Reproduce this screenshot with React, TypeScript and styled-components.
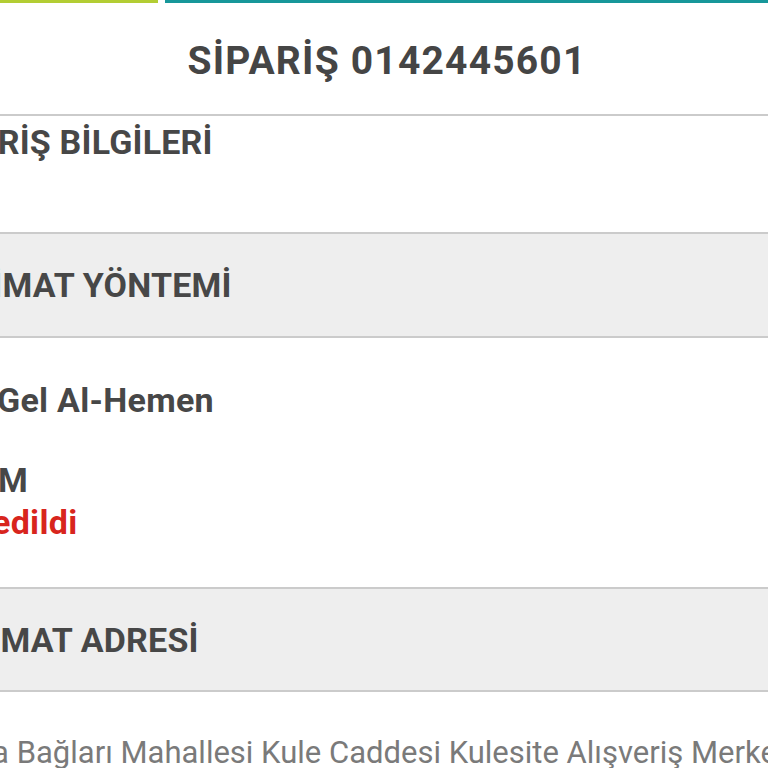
import styled, { createGlobalStyle } from "styled-components";

const GlobalStyle = createGlobalStyle`
  html, body {
    margin: 0;
    padding: 0;
    background: #ffffff;
  }
  body {
    font-family: "Roboto", "Liberation Sans", sans-serif;
    color: #474747;
  }
`;

const Screen = styled.div`
  width: 768px;
  height: 768px;
  overflow: hidden;
  display: flex;
  flex-direction: column;
  background: #ffffff;
`;

const TopBar = styled.div`
  display: flex;
  gap: 7px;
  height: 3px;
  flex-shrink: 0;
`;

const BarSegment = styled.div<{ $color: string; $width?: number }>`
  background: ${(p) => p.$color};
  ${(p) => (p.$width ? `width: ${p.$width}px;` : "flex: 1;")}
`;

const Header = styled.header`
  height: 111px;
  flex-shrink: 0;
  display: flex;
  align-items: center;
  justify-content: center;
  border-bottom: 2px solid #cbcbcb;
`;

const Title = styled.h1`
  margin: 4px 0 0;
  font-family: "Roboto", sans-serif;
  font-weight: 700;
  font-size: 39px;
  letter-spacing: 1.2px;
  color: #454545;
  padding-left: 6px;
`;

const Block = styled.section<{ $height: number; $tinted?: boolean; $center?: boolean }>`
  height: ${(p) => p.$height}px;
  flex-shrink: 0;
  background: ${(p) => (p.$tinted ? "#eeeeee" : "#ffffff")};
  border-bottom: 2px solid #cbcbcb;
  display: flex;
  flex-direction: column;
  justify-content: ${(p) => (p.$center ? "center" : "flex-start")};
  white-space: nowrap;
`;

const Heading = styled.h2<{ $shift: number; $top?: number }>`
  margin: ${(p) => p.$top ?? 0}px 0 0 ${(p) => -p.$shift}px;
  font-weight: 700;
  font-size: 34px;
  line-height: 40px;
  letter-spacing: 0.2px;
  color: #474747;
`;

const Details = styled.div`
  display: flex;
  flex-direction: column;
  padding-top: 41px;
`;

const Value = styled.div<{ $shift: number; $gap?: number; $danger?: boolean }>`
  margin: ${(p) => p.$gap ?? 0}px 0 0 ${(p) => -p.$shift}px;
  font-weight: 700;
  font-size: 34px;
  line-height: 42px;
  letter-spacing: 0.3px;
  color: ${(p) => (p.$danger ? "#d8251d" : "#474747")};
`;

const Address = styled.p<{ $shift: number }>`
  margin: 43px 0 0 ${(p) => -p.$shift}px;
  font-weight: 400;
  font-size: 31px;
  line-height: 36px;
  letter-spacing: 0;
  color: #7a7a7a;
  white-space: nowrap;
`;

const App = () => {
  return (
    <Screen>
      <GlobalStyle />
      <TopBar>
        <BarSegment $color="#b3cd33" $width={158} />
        <BarSegment $color="#17979a" />
      </TopBar>
      <Header>
        <Title>SİPARİŞ 0142445601</Title>
      </Header>

      <Block $height={116}>
        <Heading $shift={76} $top={6}>SİPARİŞ BİLGİLERİ</Heading>
      </Block>

      <Block $height={102} $tinted $center>
        <Heading $shift={88}>TESLİMAT YÖNTEMİ</Heading>
      </Block>

      <Block $height={249}>
        <Details>
          <Value $shift={192}>Mağazadan Gel Al-Hemen</Value>
          <Value $shift={92} $gap={38}>DURUM</Value>
          <Value $shift={86} $danger>İptal edildi</Value>
        </Details>
      </Block>

      <Block $height={101} $tinted $center>
        <Heading $shift={90}>TESLİMAT ADRESİ</Heading>
      </Block>

      <Address $shift={100}>
        Musalla Bağları Mahallesi Kule Caddesi Kulesite Alışveriş Merkezi
      </Address>
    </Screen>
  );
};

export default App;
